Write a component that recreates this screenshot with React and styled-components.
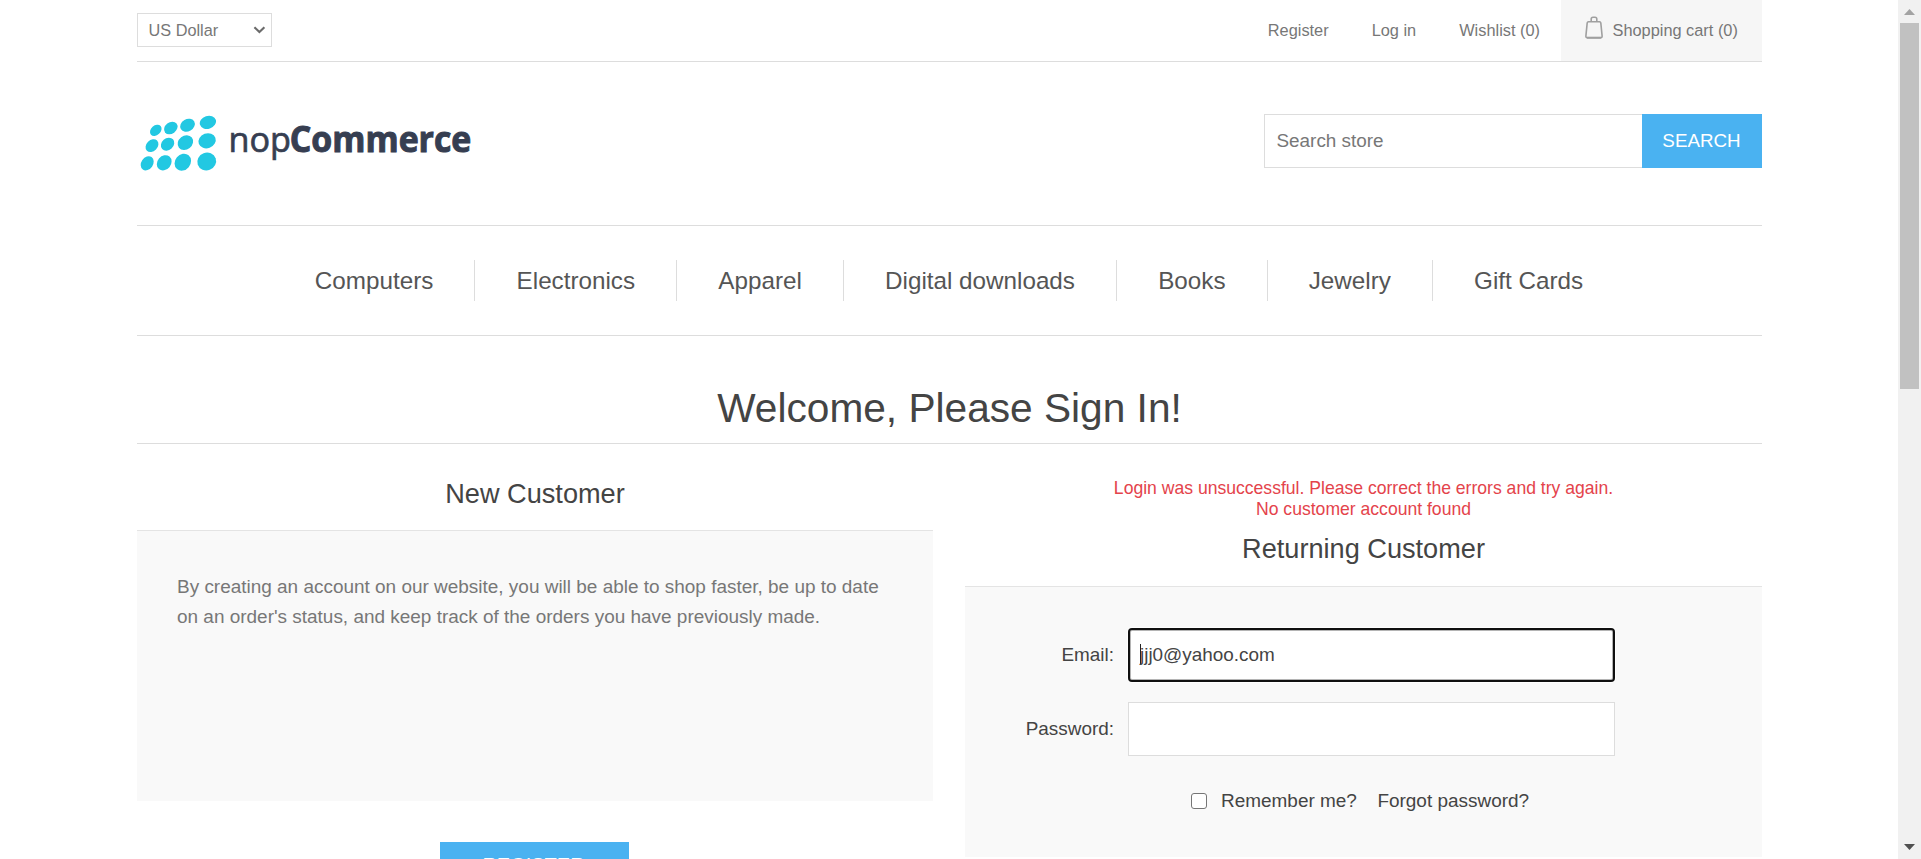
import React from "react";
import styled, { createGlobalStyle } from "styled-components";

const GlobalStyle = createGlobalStyle`
  * { box-sizing: border-box; }
  html, body { margin: 0; height: 859px; overflow: hidden; background: #fff; }
  body, input, button, select { font-family: "Liberation Sans", Arial, Helvetica, sans-serif; }
  a { color: inherit; text-decoration: none; }
`;

const Window = styled.div`
  display: flex;
  width: 1921px;
  height: 859px;
  overflow: hidden;
`;

const Viewport = styled.div`
  flex: 1;
  overflow: hidden;
`;

const Container = styled.div`
  width: 1625px;
  margin-left: 137px;
`;

const TopBar = styled.header`
  display: flex;
  justify-content: space-between;
  align-items: center;
  height: 62px;
  border-bottom: 1px solid #ddd;
  color: #777;
  font-size: 16.35px;
`;

const Currency = styled.button`
  display: flex;
  align-items: center;
  justify-content: space-between;
  width: 135px;
  height: 34px;
  margin-bottom: 1px;
  padding: 0 5px 0 10.5px;
  border: 1px solid #ddd;
  background: #fff;
  color: #777;
  font-size: 16.3px;
`;

const HeaderLinks = styled.nav`
  display: flex;
  align-items: center;
  align-self: stretch;
  gap: 43px;
`;

const CartLink = styled.a`
  display: flex;
  align-items: center;
  width: 201px;
  height: 61px;
  margin-left: -22px;
  padding-left: 23px;
  gap: 8.5px;
  background: #f6f6f6;
  white-space: nowrap;

  svg { margin-bottom: 7px; }
`;

const HeaderLower = styled.div`
  display: flex;
  justify-content: space-between;
  height: 164px;
  padding-top: 52px;
  border-bottom: 1px solid #ddd;
`;

const SearchForm = styled.div`
  display: flex;
  height: 54px;
`;

const SearchInput = styled.input`
  width: 378px;
  padding: 0 11.5px;
  border: 1px solid #ddd;
  border-right: 0;
  font-size: 18.9px;
  color: #777;
  outline: none;
  &::placeholder { color: #777; opacity: 1; }
`;

const BlueButton = styled.button`
  width: ${(p) => p.$width}px;
  height: ${(p) => p.$height}px;
  padding: 0 1px 0 0;
  border: 0;
  background: #4ab2f1;
  color: #fff;
  font-size: ${(p) => p.$size}px;
  text-transform: uppercase;
`;

const TopMenu = styled.nav`
  display: flex;
  justify-content: center;
  height: 110px;
  padding: 34px 1px 0 0;
  border-bottom: 1px solid #ddd;
`;

const MenuItem = styled.a`
  height: 41px;
  padding: 0 41.1px;
  line-height: 41px;
  font-size: 24.24px;
  color: #555;
  white-space: nowrap;
  & + & { border-left: 1px solid #ddd; }
`;

const PageTitle = styled.h1`
  height: 108px;
  margin: 0;
  padding-top: 47px;
  border-bottom: 1px solid #ddd;
  color: #444;
  font-size: 40.65px;
  font-weight: normal;
  line-height: 50px;
  text-align: center;
`;

const Columns = styled.main`
  display: flex;
  justify-content: space-between;
  align-items: flex-start;
  padding-top: 34px;
`;

const Column = styled.section`
  display: flex;
  flex-direction: column;
  align-items: center;
  width: ${(p) => p.$width}px;
`;

const ColumnTitle = styled.h2`
  margin: 0 0 ${(p) => p.$gap}px;
  color: #444;
  font-size: 27.15px;
  font-weight: normal;
  line-height: 32px;
`;

const Errors = styled.div`
  margin-bottom: 12px;
  color: #e4434b;
  font-size: 17.59px;
  line-height: 21.3px;
  text-align: center;
`;

const Panel = styled.div`
  width: 100%;
  height: 271px;
  padding-top: 41px;
  border-top: 1px solid #e4e4e4;
  background: #f9f9f9;
`;

const Intro = styled.p`
  margin: 0 0 0 40px;
  color: #777;
  font-size: 18.97px;
  line-height: 30px;
  white-space: nowrap;
`;

const ButtonRow = styled.div`
  padding: 41px 2px 0 0;
`;

const Field = styled.label`
  display: flex;
  align-items: center;
  height: 54px;
  margin-bottom: 20px;
  color: #444;
  font-size: 18.92px;
`;

const FieldLabel = styled.span`
  width: 149px;
  margin-right: 14px;
  text-align: right;
`;

const InputBox = styled.span`
  display: flex;
  align-items: center;
  width: 487px;
  height: 54px;
  padding-left: ${(p) => (p.$focused ? 10 : 11)}px;
  border: ${(p) => (p.$focused ? "2px solid #101010" : "1px solid #ddd")};
  border-radius: ${(p) => (p.$focused ? 4 : 0)}px;
  box-shadow: ${(p) => (p.$focused ? "0 0 0 1px #fff, inset 0 0 0 1px #b4b4b4" : "none")};
  background: #fff;
`;

const Caret = styled.span`
  width: 1px;
  height: 21px;
  margin-right: -1px;
  background: #222;
`;

const Options = styled.div`
  display: flex;
  align-items: center;
  height: 24px;
  margin-top: 33px;
  padding-left: 226px;
  color: #444;
  font-size: 18.95px;
`;

const Checkbox = styled.span`
  width: 16px;
  height: 16px;
  margin-right: 14px;
  border: 1px solid #767676;
  border-radius: 3px;
  background: #fff;
`;

const Forgot = styled.a`
  margin-left: 20.5px;
`;

const Scrollbar = styled.aside`
  display: flex;
  flex-direction: column;
  align-items: center;
  width: 23px;
  height: 859px;
  background: #f1f1f1;
`;

const ScrollButton = styled.span`
  display: flex;
  height: 23px;
`;

const Thumb = styled.span`
  width: 19px;
  height: 366px;
  margin-bottom: auto;
  background: #c1c1c1;
`;

const dots = [
  [155.8, 130.3, 6.5, 4.8, -42], [170.8, 128, 7.3, 5.7, -38], [187.5, 125.2, 7.7, 6.1, -30], [207.9, 122.3, 8.3, 6.4, -18],
  [152, 145.6, 7.2, 5.6, -45], [167.6, 144.2, 7.3, 5.9, -42], [185.4, 142.6, 8.2, 6.9, -38], [207.1, 140.8, 8.8, 7.4, -20],
  [147.2, 163.3, 7.6, 5.9, -55], [164.2, 162.8, 8.2, 6.8, -50], [182.8, 162.2, 9, 7.7, -50], [206.7, 161.5, 9.5, 8.9, -20],
];

const Logo = () => (
  <svg width="345" height="76" viewBox="137 114 345 76" aria-label="nopCommerce">
    {dots.map(([x, y, rx, ry, r]) => (
      <ellipse key={`${x}`} cx={x} cy={y} rx={rx} ry={ry} transform={`rotate(${r} ${x} ${y})`} fill="#22c8e2" />
    ))}
    <g fill="#363e51" stroke="#363e51" fontFamily='"Open Sans", "Noto Sans", sans-serif' fontSize="35.5">
      <text x="228.5" y="152.2" strokeWidth="0.7" textLength="62.5" lengthAdjust="spacingAndGlyphs">nop</text>
      <text x="289.8" y="152.2" strokeWidth="1" fontWeight="700" textLength="181.5" lengthAdjust="spacingAndGlyphs">Commerce</text>
    </g>
  </svg>
);

const BagIcon = () => (
  <svg width="20" height="24" viewBox="0 0 20 24" fill="none" stroke="#a0a0a0">
    <path d="M4.4 6.8h11.2q1 0 1.2 1l1.3 13q.2 2-1.5 2H3.4q-1.7 0-1.5-2l1.3-13q.2-1 1.2-1z" strokeWidth="1.6" />
    <path d="M7.2 6.8V4Q7.2 2.2 9 2.2h2q1.8 0 1.8 1.8v2.8" strokeWidth="1.6" />
    <path d="M2.8 22.7h14.4" strokeWidth="2" />
  </svg>
);

const menu = ["Computers", "Electronics", "Apparel", "Digital downloads", "Books", "Jewelry", "Gift Cards"];

export default function App() {
  return (
    <Window>
      <GlobalStyle />
      <Viewport>
        <Container>
          <TopBar>
            <Currency>
              US Dollar
              <svg width="13" height="8" viewBox="0 0 13 8" fill="none" stroke="#6b6b6b" strokeWidth="2.1">
                <path d="M1.4 1.2l5 4.9 5-4.9" />
              </svg>
            </Currency>
            <HeaderLinks>
              <a href="#register">Register</a>
              <a href="#login">Log in</a>
              <a href="#wishlist">Wishlist (0)</a>
              <CartLink href="#cart">
                <BagIcon />
                Shopping cart (0)
              </CartLink>
            </HeaderLinks>
          </TopBar>
          <HeaderLower>
            <Logo />
            <SearchForm>
              <SearchInput placeholder="Search store" />
              <BlueButton $width={120} $height={54} $size={18.8}>Search</BlueButton>
            </SearchForm>
          </HeaderLower>
          <TopMenu>
            {menu.map((m) => (
              <MenuItem key={m} href="#menu">{m}</MenuItem>
            ))}
          </TopMenu>
          <PageTitle>Welcome, Please Sign In!</PageTitle>
          <Columns>
            <Column $width={796}>
              <ColumnTitle $gap={20}>New Customer</ColumnTitle>
              <Panel>
                <Intro>
                  By creating an account on our website, you will be able to shop faster, be up to date
                  <br />
                  on an order's status, and keep track of the orders you have previously made.
                </Intro>
              </Panel>
              <ButtonRow>
                <BlueButton $width={189} $height={46} $size={20}>Register</BlueButton>
              </ButtonRow>
            </Column>
            <Column $width={797}>
              <Errors>
                Login was unsuccessful. Please correct the errors and try again.
                <br />
                No customer account found
              </Errors>
              <ColumnTitle $gap={21}>Returning Customer</ColumnTitle>
              <Panel>
                <Field>
                  <FieldLabel>Email:</FieldLabel>
                  <InputBox $focused>
                    <Caret />
                    jjj0@yahoo.com
                  </InputBox>
                </Field>
                <Field>
                  <FieldLabel>Password:</FieldLabel>
                  <InputBox />
                </Field>
                <Options>
                  <Checkbox />
                  Remember me?
                  <Forgot href="#forgot">Forgot password?</Forgot>
                </Options>
              </Panel>
            </Column>
          </Columns>
        </Container>
      </Viewport>
      <Scrollbar>
        <ScrollButton>
          <svg width="23" height="23"><path d="M6 15h11L11.5 9z" fill="#a3a3a3" /></svg>
        </ScrollButton>
        <Thumb />
        <ScrollButton>
          <svg width="23" height="23"><path d="M6 8h11l-5.5 6z" fill="#505050" /></svg>
        </ScrollButton>
      </Scrollbar>
    </Window>
  );
}
